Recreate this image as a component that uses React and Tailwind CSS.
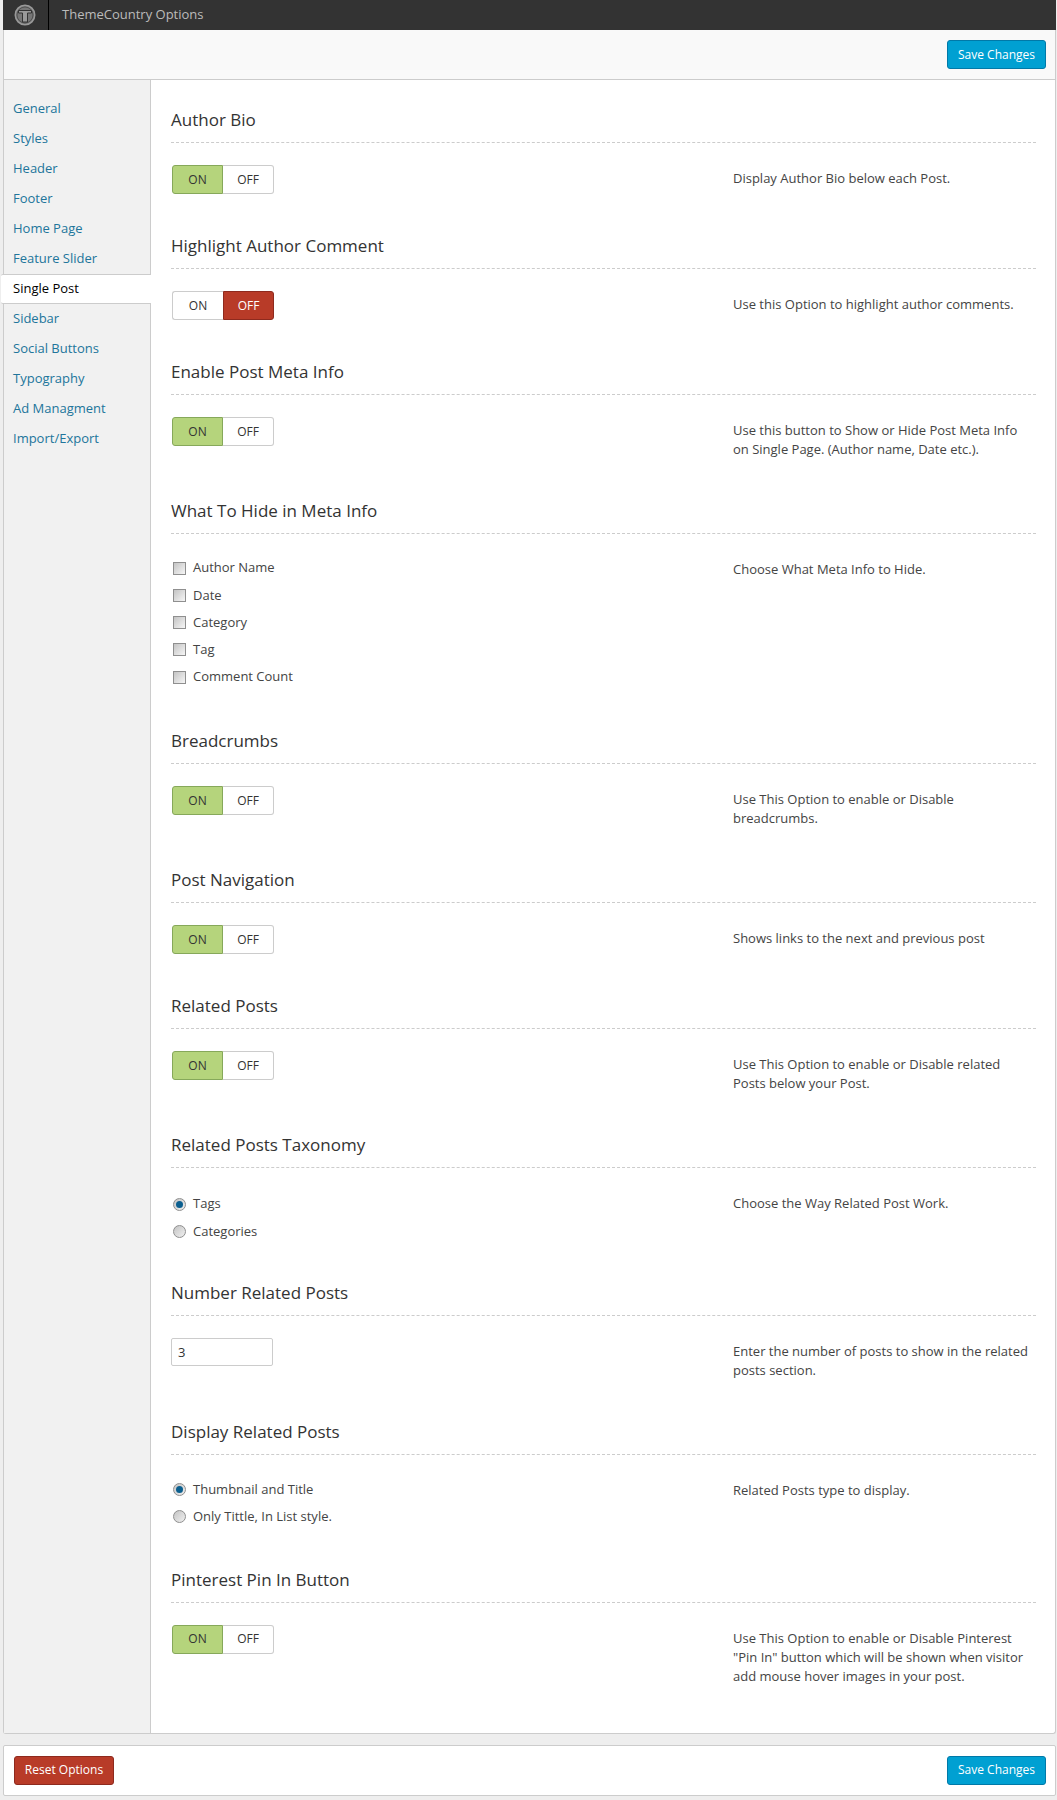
import React from "react";

const NAV = ["General", "Styles", "Header", "Footer", "Home Page", "Feature Slider", "Single Post", "Sidebar", "Social Buttons", "Typography", "Ad Managment", "Import/Export"];

const Logo = () => (
  <svg width="22" height="22" viewBox="0 0 22 22">
    <circle cx="11" cy="11" r="9.75" fill="#777" stroke="#999" strokeWidth="1.5" />
    <circle cx="11" cy="11" r="8" fill="none" stroke="#444" strokeWidth="0.75" />
    <path d="M4.500 6.500h13v2.500h-4v9h-5V9h-4z" fill="#9a9a9a" stroke="#333" strokeWidth="1" />
  </svg>
);

const Button = ({ color = "blue", children }) => (
  <button className={`h-[29px] rounded-[3px] border text-[12px] text-white ${color === "blue" ? "w-[99px] border-[#0079a8] bg-[#00a0d2]" : "w-[100px] border-[#8e2a1e] bg-[#b83b28]"}`}>
    {children}
  </button>
);

// on = true: green ON, on = false: red OFF
const Toggle = ({ on = true }) => (
  <div className="ml-px flex h-[29px] w-[102px] text-[12px] text-[#333]">
    <div className={`flex w-[51px] items-center justify-center rounded-l-[3px] border ${on ? "border-[#86a85a] bg-[#b5d47c]" : "border-[#ccc] border-r-0 bg-white"}`}>ON</div>
    <div className={`flex w-[51px] items-center justify-center rounded-r-[3px] border ${on ? "border-[#ccc] border-l-0 bg-white" : "border-[#8e2a1e] bg-[#b83b28] text-white"}`}>OFF</div>
  </div>
);

const Checkbox = ({ label }) => (
  <label className="flex h-[22px] items-center gap-[7px]">
    <span className="ml-[2px] h-[13px] w-[13px] border border-[#8f8f8f] bg-gradient-to-br from-[#c4c4c4] to-[#f6f6f6]" />
    <span>{label}</span>
  </label>
);

const Radio = ({ label, checked }) => (
  <label className="flex h-[22px] items-center gap-[7px]">
    <span className="ml-[2px] flex h-[13px] w-[13px] items-center justify-center rounded-full border border-[#8f8f8f] bg-gradient-to-br from-[#c4c4c4] to-[#f0f0f0]">
      {checked && <span className="h-[7px] w-[7px] rounded-full bg-[#0b5f8f]" />}
    </span>
    <span>{label}</span>
  </label>
);

const Section = ({ title, desc, children }) => (
  <section className="mb-[40px]">
    <h3 className="border-b border-dashed border-[#ccc] pb-[10px] text-[17px] leading-[24px] text-[#333]">{title}</h3>
    <div className="mt-[22px] flex">
      <div className="w-[562px] shrink-0">{children}</div>
      <p className="w-[296px] pt-[4px] leading-[19px]">{desc}</p>
    </div>
  </section>
);

const Stack = ({ children, className = "pt-px" }) => <div className={`flex flex-col gap-[5.25px] ${className}`}>{children}</div>;

export default function App() {
  return (
    <div className="min-h-[1800px] bg-[#eeeeee] pl-[3px] pr-px text-[13px] text-[#444]" style={{ fontFamily: '"Open Sans", sans-serif' }}>
      <div className="flex h-[30px] items-center bg-[#333333]">
        <div className="flex h-full w-[46px] items-center justify-center border-r border-black pr-[1px]">
          <Logo />
        </div>
        <span className="ml-[13px] text-[#bbbbbb]">ThemeCountry Options</span>
      </div>

      <div className="rounded-b-[3px] border-x border-b border-[#ccc] bg-white">
        <div className="flex h-[50px] items-center justify-end border-b border-[#ccc] bg-[#f9f9f9] pr-[9px]">
          <Button>Save Changes</Button>
        </div>

        <div className="flex">
          <nav className="w-[147px] shrink-0 border-r border-[#ccc] bg-[#f1f1f1] pt-[14px]">
            {NAV.map((item) =>
              item === "Single Post" ? (
                <a key={item} className="-ml-[3px] -mr-px flex h-[30px] items-center rounded-l-[2px] border-y border-[#ccc] bg-white pl-[12px] text-black">
                  {item}
                </a>
              ) : (
                <a key={item} className="flex h-[30px] items-center pl-[9px] text-[#21759b]">
                  {item}
                </a>
              )
            )}
          </nav>

          <main className="min-w-0 flex-1 pb-[7px] pl-[20px] pr-[19px] pt-[28px]">
            <Section title="Author Bio" desc="Display Author Bio below each Post.">
              <Toggle />
            </Section>
            <Section title="Highlight Author Comment" desc="Use this Option to highlight author comments.">
              <Toggle on={false} />
            </Section>
            <Section title="Enable Post Meta Info" desc="Use this button to Show or Hide Post Meta Info on Single Page. (Author name, Date etc.).">
              <Toggle />
            </Section>
            <Section title="What To Hide in Meta Info" desc="Choose What Meta Info to Hide.">
              <Stack className="pt-px pb-px">
                <Checkbox label="Author Name" />
                <Checkbox label="Date" />
                <Checkbox label="Category" />
                <Checkbox label="Tag" />
                <Checkbox label="Comment Count" />
              </Stack>
            </Section>
            <Section title="Breadcrumbs" desc="Use This Option to enable or Disable breadcrumbs.">
              <Toggle />
            </Section>
            <Section title="Post Navigation" desc="Shows links to the next and previous post">
              <Toggle />
            </Section>
            <Section title="Related Posts" desc="Use This Option to enable or Disable related Posts below your Post.">
              <Toggle />
            </Section>
            <Section title="Related Posts Taxonomy" desc="Choose the Way Related Post Work.">
              <Stack className="-mb-px pt-[3px]">
                <Radio label="Tags" checked />
                <Radio label="Categories" />
              </Stack>
            </Section>
            <Section title="Number Related Posts" desc="Enter the number of posts to show in the related posts section.">
              <input readOnly value="3" className="h-[28px] w-[102px] rounded-[2px] border border-[#ccc] px-[6px] text-[#333]" />
            </Section>
            <Section title="Display Related Posts" desc="Related Posts type to display.">
              <Stack>
                <Radio label="Thumbnail and Title" checked />
                <Radio label="Only Tittle, In List style." />
              </Stack>
            </Section>
            <Section title="Pinterest Pin In Button" desc={'Use This Option to enable or Disable Pinterest "Pin In" button which will be shown when visitor add mouse hover images in your post.'}>
              <Toggle />
            </Section>
          </main>
        </div>
      </div>

      <div className="mt-[11px] flex h-[51px] items-center justify-between rounded-[2px] border border-[#ccc] bg-white pl-[10px] pr-[9px]">
        <Button color="red">Reset Options</Button>
        <Button>Save Changes</Button>
      </div>
    </div>
  );
}
